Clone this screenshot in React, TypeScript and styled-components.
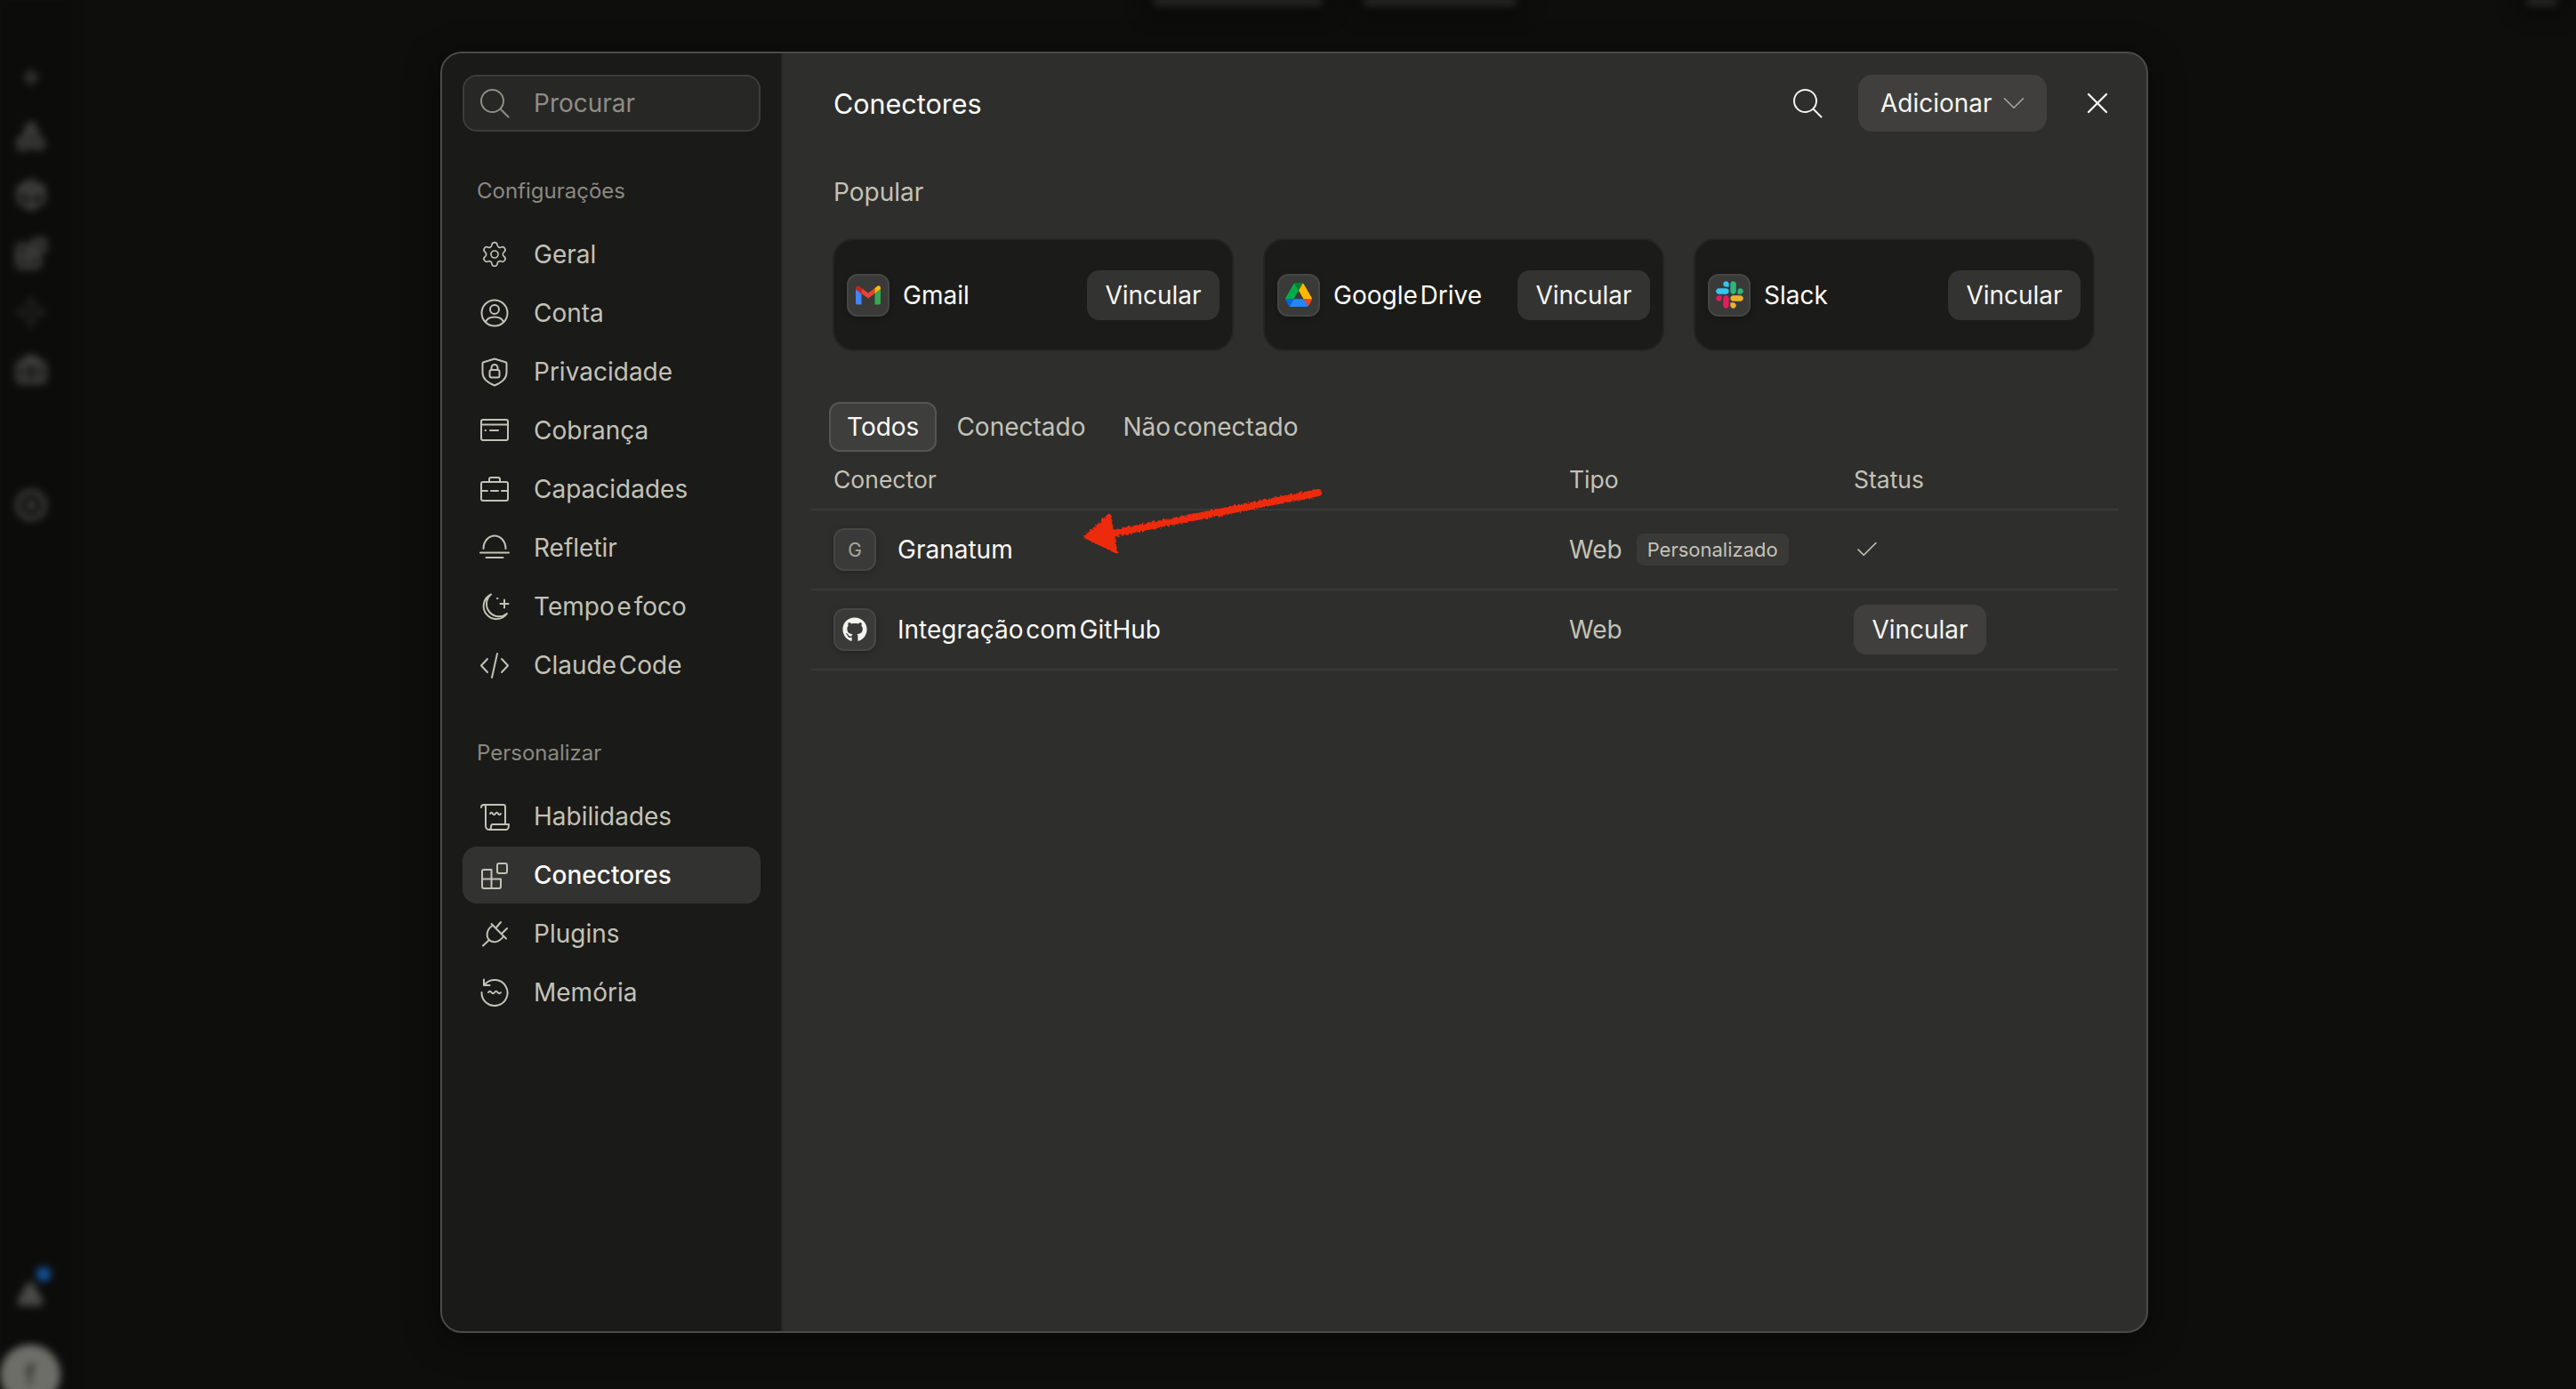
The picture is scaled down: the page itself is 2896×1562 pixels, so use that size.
import React from 'react';
import styled, { createGlobalStyle } from 'styled-components';
import { Check, ChevronDown, Settings, X, Sparkle, Blocks, Package, Shapes, Briefcase, Disc, Triangle } from 'lucide-react';
import { FaGithub } from 'react-icons/fa';

const GlobalStyle = createGlobalStyle`
  html, body { margin: 0; padding: 0; background: #0d0d0c; }
  * { box-sizing: border-box; }
  body { font-family: Inter, "Noto Sans", sans-serif; color: #c3c2b7; word-spacing: -5px; }
`;

const Page = styled.div`
  position: relative;
  width: 2896px;
  height: 1562px;
  overflow: hidden;
  background: #0e0e0d;
`;

// blurred app behind the dialog
const Backdrop = styled.div`
  display: flex;
  height: 100%;
`;

const Rail = styled.div`
  width: 84px;
  height: 100%;
  display: flex;
  flex-direction: column;
  padding-top: 54px;
  background: #0c0c0b;
  color: #4a4a47;
  filter: blur(4px);
`;

const RailItem = styled.div<{ $gap?: number; $faint?: boolean }>`
  height: 66px;
  width: 70px;
  flex: none;
  display: flex;
  align-items: center;
  justify-content: center;
  margin-top: ${(p) => p.$gap ?? 0}px;
  opacity: ${(p) => (p.$faint ? 0.3 : 1)};
`;

const RailFoot = styled.div`
  margin-top: auto;
  display: flex;
  flex-direction: column;
`;

const Bell = styled.div`
  position: relative;
  height: 44px;
  width: 68px;
  display: flex;
  align-items: center;
  justify-content: center;
`;

const BlueDot = styled.span`
  position: absolute;
  left: 41px;
  top: -8px;
  width: 16px;
  height: 16px;
  border-radius: 50%;
  background: #14559f;
`;

const Avatar = styled.div`
  width: 68px;
  height: 68px;
  margin: 35px 0 -18px 0;
  border-radius: 50%;
  background: #6d6e67;
  color: #1a1a18;
  display: flex;
  align-items: center;
  justify-content: center;
  font-size: 30px;
`;

const TopArea = styled.div`
  flex: 1;
  display: flex;
  gap: 46px;
  padding: 0 20px 0 1212px;
`;

const BlurBar = styled.div<{ $w: number; $end?: boolean }>`
  width: ${(p) => p.$w}px;
  height: 8px;
  margin: -2px 0 0 ${(p) => (p.$end ? 'auto' : '0')};
  background: #2c2c2a;
  border-radius: 4px;
  box-shadow: 0 0 18px 10px #090909;
  filter: blur(4px);
`;

const Overlay = styled.div`
  position: absolute;
  inset: 0;
  padding: 58px 0 0 495px;
`;

const Dialog = styled.div`
  width: 1920px;
  height: 1441px;
  display: flex;
  overflow: hidden;
  border: 2px solid #4b4b48;
  border-radius: 24px;
  background: #2e2e2c;
  box-shadow: 0 8px 40px rgba(0, 0, 0, 0.45);
`;

const Sidebar = styled.aside`
  width: 383px;
  flex: none;
  padding: 24px 23px 0;
  background: #1a1a18;
  border-right: 2px solid #262624;
`;

const SearchBox = styled.div`
  height: 64px;
  display: flex;
  align-items: center;
  gap: 28px;
  padding-left: 18px;
  border: 2px solid #3c3c39;
  border-radius: 16px;
  background: #272725;
  color: #8e8d85;
  font-size: 28px;
`;

const SectionLabel = styled.div`
  height: 34px;
  margin: 49px 0 23px 16px;
  display: flex;
  align-items: center;
  color: #8a8981;
  font-size: 24px;
`;

const NavList = styled.nav`
  display: flex;
  flex-direction: column;
  gap: 2px;
`;

const NavItem = styled.div<{ $active?: boolean }>`
  height: 64px;
  display: flex;
  align-items: center;
  gap: 28px;
  padding-left: 20px;
  border-radius: 16px;
  font-size: 28px;
  font-weight: ${(p) => (p.$active ? 500 : 400)};
  color: ${(p) => (p.$active ? '#fbfbf8' : '#c3c2b7')};
  background: ${(p) => (p.$active ? '#323230' : 'transparent')};
`;

const NavGlyph = styled.span`
  width: 32px;
  height: 32px;
  flex: none;
  display: flex;
  align-items: center;
  justify-content: center;
  color: #c3c2b7;
`;

const IconSvg = styled.svg`
  width: 32px;
  height: 32px;
  flex: none;
  fill: none;
  stroke: currentColor;
  stroke-width: 2;
  stroke-linecap: round;
  stroke-linejoin: round;
  overflow: visible;
`;

const Main = styled.main`
  flex: 1;
  padding: 24px 31px 0 32px;
  display: flex;
  flex-direction: column;
`;

const Header = styled.header`
  height: 64px;
  display: flex;
  align-items: center;
  gap: 37px;
  padding: 0 4px 0 25px;
`;

const Title = styled.h1`
  margin: 0 auto 0 0;
  font-size: 30.5px;
  font-weight: 400;
  color: #fbfbf8;
`;

const IconButton = styled.button`
  width: 40px;
  height: 40px;
  padding: 0;
  border: 0;
  background: none;
  color: #f4f4ef;
  display: flex;
  align-items: center;
  justify-content: center;
`;

const AddButton = styled.button`
  width: 212px;
  height: 64px;
  padding: 0 0 0 25px;
  border: 0;
  border-radius: 16px;
  background: #403f3d;
  color: #f6f6f1;
  font: inherit;
  font-size: 28px;
  display: flex;
  align-items: center;
  gap: 3px;
`;

const Popular = styled.div`
  height: 36px;
  margin: 50px 0 34px 25px;
  display: flex;
  align-items: center;
  color: #c3c2b7;
  font-size: 28px;
`;

const Cards = styled.div`
  display: flex;
  gap: 33px;
  padding-left: 24px;
`;

const Card = styled.div`
  width: 451px;
  height: 127px;
  display: flex;
  align-items: center;
  gap: 15px;
  padding: 0 14px 0 14px;
  border-radius: 24px;
  background: #1b1b19;
  border: 2px solid #242422;
  color: #fbfbf8;
  font-size: 28px;
`;

const LogoTile = styled.div<{ $muted?: boolean }>`
  width: 48px;
  height: 48px;
  flex: none;
  display: flex;
  align-items: center;
  justify-content: center;
  border-radius: 12px;
  background: #3a3a38;
  border: 2px solid #464643;
  color: ${(p) => (p.$muted ? '#a9a89f' : '#f4f4ef')};
  font-size: 21px;
  box-shadow: 0 2px 6px rgba(0, 0, 0, 0.25);
`;

const LinkButton = styled.button<{ $raised?: boolean }>`
  width: 149px;
  height: 56px;
  margin-left: ${(p) => (p.$raised ? 0 : 'auto')};
  padding: 0;
  border: 0;
  border-radius: 14px;
  background: ${(p) => (p.$raised ? '#403f3d' : '#333331')};
  color: #f6f6f1;
  font: inherit;
  font-size: 28px;
`;

const Tabs = styled.div`
  display: flex;
  gap: 2px;
  margin: 57px 0 0 20px;
`;

const Tab = styled.div<{ $active?: boolean }>`
  height: 56px;
  display: flex;
  align-items: center;
  padding: 0 18px;
  border: 2px solid ${(p) => (p.$active ? '#555552' : 'transparent')};
  border-radius: 12px;
  background: ${(p) => (p.$active ? '#3e3e3c' : 'transparent')};
  color: ${(p) => (p.$active ? '#fbfbf8' : '#c3c2b7')};
  font-size: 28px;
`;

const Row = styled.div<{ $head?: boolean }>`
  display: grid;
  grid-template-columns: 827px 320px 1fr;
  align-items: center;
  height: ${(p) => (p.$head ? 66 : 90)}px;
  padding: ${(p) => (p.$head ? '0 0 2px 25px' : '0 0 0 25px')};
  border-bottom: 2px solid #393937;
  font-size: ${(p) => (p.$head ? 26.5 : 28)}px;
  color: #c3c2b7;
`;

const NameCell = styled.div`
  display: flex;
  align-items: center;
  gap: 24px;
  color: #fbfbf8;
`;

const TypeCell = styled.div`
  display: flex;
  align-items: center;
  gap: 16px;
`;

const Badge = styled.span`
  height: 36px;
  padding: 0 12px;
  display: flex;
  align-items: center;
  border-radius: 8px;
  background: #393937;
  font-size: 22px;
`;

const StatusCheck = styled.div`
  display: flex;
  color: #c3c2b7;
`;

const MarkArrow = styled.svg`
  position: absolute;
  left: 1210px;
  top: 540px;
  width: 285px;
  height: 95px;
  overflow: visible;
`;

const SearchIcon = () => (
  <IconSvg viewBox="0 0 32 32">
    <circle cx="13.5" cy="13.5" r="12.5" />
    <path d="M23 23l8.5 8.5" />
  </IconSvg>
);

const GearIcon = () => <Settings size={40} strokeWidth={1.25} />;

const AccountIcon = () => (
  <IconSvg viewBox="0 0 32 32">
    <circle cx="16" cy="16" r="14.5" />
    <circle cx="16" cy="12" r="5" />
    <path d="M6 26c1.5-4 5.5-5.5 10-5.5S24.500 22 26 26" />
  </IconSvg>
);

const ShieldIcon = () => (
  <IconSvg viewBox="0 0 32 32">
    <path d="M16 1.500 29 5.500a1 1 0 0 1 .5 1V17c0 7-6 11.500-13.500 14.500C8.500 28.500 2.500 24 2.500 17V6.500a1 1 0 0 1 .5-1z" />
    <rect x="10.500" y="14" width="11" height="8.500" rx="2" />
    <path d="M12.500 14v-2.500a3.500 3.500 0 0 1 7 0V14" />
  </IconSvg>
);

const BillingIcon = () => (
  <IconSvg viewBox="0 0 32 32">
    <rect x="1" y="4" width="30" height="23" rx="2" />
    <path d="M1 9.500h30M5.500 16h.5M11 16h9" />
  </IconSvg>
);

const CaseIcon = () => (
  <IconSvg viewBox="0 0 32 32">
    <rect x="1" y="8" width="30" height="21" rx="2" />
    <path d="M10 8V5a2 2 0 0 1 2-2h8a2 2 0 0 1 2 2v3M1 18h7M12 18h8M24 18h7" />
  </IconSvg>
);

const ReflectIcon = () => (
  <IconSvg viewBox="0 0 32 32">
    <path d="M3.500 17A12.500 14.500 0 0 1 28.500 17M0 21.500h32M6.500 27h19" />
  </IconSvg>
);

const MoonIcon = () => (
  <IconSvg viewBox="0 0 32 32">
    <path d="M12 2.500A14.500 14.500 0 1 0 30 24 13 13 0 0 1 12 2.500z" />
    <path d="M27 8.500v9M22.500 13h9M19 7h.5" />
  </IconSvg>
);

const CodeIcon = () => (
  <IconSvg viewBox="0 0 32 32">
    <path d="M8 9l-7 7.500L8 24M24 9l7 7.500L24 24M19 3l-6 27" />
  </IconSvg>
);

const ScrollIcon = () => (
  <IconSvg viewBox="0 0 32 32">
    <path d="M1 6c0-2 1.500-3 3-3s2 1.500 2 3v21c0 2.500 2 4 4 4h19c2 0 3-2 3-6H14c-2 0-2 2-2 3 0 1.800-1 3-2 3" />
    <path d="M4 3h22c1.500 0 2 1 2 2v20M11 13q1.500-2.500 3 0t3 0 3 0 3 0" />
  </IconSvg>
);

const ConnectorIcon = () => (
  <IconSvg viewBox="0 0 32 32">
    <path d="M2 12a2 2 0 0 1 2-2h8.500v10.500H23V29a2 2 0 0 1-2 2H4a2 2 0 0 1-2-2z" />
    <path d="M2 20.500h10.500V31" />
    <rect x="19" y="3" width="11" height="11" rx="2" />
  </IconSvg>
);

const PlugIcon = () => (
  <IconSvg viewBox="0 0 32 32">
    <path d="M12.500 5L29 21.500M13.500 7C7 11 6 19 10 23s11 3 16-4M10 23l-7 6.500M23 3l-5.500 6.500M30 10l-6 6" />
  </IconSvg>
);

const MemoryIcon = () => (
  <IconSvg viewBox="0 0 32 32">
    <path d="M5.500 6.500A14.500 14.500 0 1 1 1.500 16" />
    <path d="M4 1.500v6.500h6.500M9 16q1.750-2.500 3.500 0t3.500 0 3.500 0 3.500 0" />
  </IconSvg>
);

const GmailLogo = () => (
  <svg width="28" height="22" viewBox="0 0 28 22">
    <path d="M0 4v15.500a2 2 0 0 0 2 2h4.500V9z" fill="#4285f4" />
    <path d="M21.500 9v12.500H26a2 2 0 0 0 2-2V4z" fill="#34a853" />
    <path d="M6.500 9 14 14.500 21.500 9V3L14 8.500 6.500 3z" fill="#ea4335" />
    <path d="M0 3v1l6.500 5V3L4 1C2-.5 0 1 0 3z" fill="#c5221f" />
    <path d="M21.500 3v6L28 4V3c0-2.500-2-3.500-4-2z" fill="#fbbc04" />
  </svg>
);

const DriveLogo = () => (
  <svg width="30" height="27" viewBox="0 0 87.300 78">
    <path d="m6.600 66.850 3.850 6.650c.8 1.400 1.950 2.500 3.300 3.300l13.750-23.800h-27.500c0 1.550.4 3.100 1.200 4.500z" fill="#0066da" />
    <path d="m43.650 25-13.750-23.800c-1.350.8-2.500 1.900-3.300 3.300l-25.400 44a9.060 9.060 0 0 0 -1.200 4.500h27.500z" fill="#00ac47" />
    <path d="m73.550 76.800c1.350-.8 2.500-1.900 3.300-3.300l1.600-2.750 7.650-13.250c.8-1.400 1.200-2.950 1.200-4.500h-27.502l5.852 11.500z" fill="#ea4335" />
    <path d="m43.650 25 13.750-23.800c-1.350-.8-2.900-1.200-4.500-1.200h-18.500c-1.600 0-3.150.45-4.500 1.200z" fill="#00832d" />
    <path d="m59.800 53h-32.300l-13.750 23.800c1.350.8 2.900 1.200 4.500 1.200h50.800c1.600 0 3.150-.45 4.500-1.200z" fill="#2684fc" />
    <path d="m73.400 26.500-12.700-22c-.8-1.400-1.950-2.500-3.300-3.300l-13.750 23.800 16.150 28h27.450c0-1.550-.4-3.100-1.200-4.500z" fill="#ffba00" />
  </svg>
);

const SlackLogo = () => (
  <svg width="31" height="31" viewBox="0 0 127 127">
    <path d="M27.200 80c0 7.300-5.900 13.200-13.200 13.200C6.700 93.200.8 87.300.8 80c0-7.300 5.900-13.200 13.200-13.200h13.200V80zm6.600 0c0-7.300 5.900-13.200 13.200-13.200 7.300 0 13.200 5.900 13.200 13.200v33c0 7.300-5.900 13.200-13.200 13.200-7.300 0-13.200-5.900-13.200-13.200V80z" fill="#E01E5A" />
    <path d="M47 27c-7.300 0-13.200-5.900-13.200-13.200C33.800 6.500 39.700.6 47 .6c7.300 0 13.200 5.900 13.200 13.200V27H47zm0 6.700c7.300 0 13.200 5.900 13.200 13.200 0 7.300-5.900 13.200-13.200 13.200H13.900C6.600 60.100.7 54.200.7 46.900c0-7.300 5.900-13.200 13.200-13.200H47z" fill="#36C5F0" />
    <path d="M99.900 46.900c0-7.300 5.900-13.200 13.200-13.200 7.300 0 13.200 5.900 13.200 13.200 0 7.300-5.900 13.200-13.200 13.200H99.900V46.900zm-6.600 0c0 7.300-5.900 13.200-13.200 13.200-7.300 0-13.200-5.900-13.200-13.200V13.800C66.900 6.500 72.800.6 80.100.6c7.300 0 13.200 5.900 13.200 13.200v33.100z" fill="#2EB67D" />
    <path d="M80.100 99.800c7.300 0 13.200 5.900 13.200 13.200 0 7.300-5.900 13.200-13.200 13.200-7.300 0-13.200-5.900-13.200-13.200V99.800h13.200zm0-6.600c-7.300 0-13.200-5.900-13.200-13.200 0-7.300 5.900-13.200 13.200-13.200h33.100c7.300 0 13.200 5.900 13.200 13.200 0 7.300-5.900 13.200-13.200 13.200H80.100z" fill="#ECB22E" />
  </svg>
);

const settingsItems = [
  { label: 'Geral', icon: <GearIcon /> },
  { label: 'Conta', icon: <AccountIcon /> },
  { label: 'Privacidade', icon: <ShieldIcon /> },
  { label: 'Cobrança', icon: <BillingIcon /> },
  { label: 'Capacidades', icon: <CaseIcon /> },
  { label: 'Refletir', icon: <ReflectIcon /> },
  { label: 'Tempo e foco', icon: <MoonIcon /> },
  { label: 'Claude Code', icon: <CodeIcon /> },
];

const customizeItems = [
  { label: 'Habilidades', icon: <ScrollIcon /> },
  { label: 'Conectores', icon: <ConnectorIcon />, active: true },
  { label: 'Plugins', icon: <PlugIcon /> },
  { label: 'Memória', icon: <MemoryIcon /> },
];

const popular = [
  { name: 'Gmail', logo: <GmailLogo /> },
  { name: 'Google Drive', logo: <DriveLogo /> },
  { name: 'Slack', logo: <SlackLogo /> },
];

const railIcons = [Sparkle, Shapes, Package, Blocks, Sparkle, Briefcase];

const App: React.FC = () => {
  return (
    <Page>
      <GlobalStyle />
      <Backdrop>
        <Rail>
          {railIcons.map((Icon, i) => (
            <RailItem key={i} $faint={i === 4}>
              <Icon size={i === 0 ? 18 : 36} strokeWidth={3} />
            </RailItem>
          ))}
          <RailItem $gap={85}>
            <Disc size={36} strokeWidth={3} />
          </RailItem>
          <RailFoot>
            <Bell>
              <BlueDot />
              <Triangle size={30} strokeWidth={3} fill="currentColor" />
            </Bell>
            <Avatar>f</Avatar>
          </RailFoot>
        </Rail>
        <TopArea>
          <BlurBar $w={191} />
          <BlurBar $w={172} />
          <BlurBar $w={36} $end />
        </TopArea>
      </Backdrop>

      <Overlay>
        <Dialog>
          <Sidebar>
            <SearchBox>
              <SearchIcon />
              Procurar
            </SearchBox>
            <SectionLabel>Configurações</SectionLabel>
            <NavList>
              {settingsItems.map((item) => (
                <NavItem key={item.label}>
                  <NavGlyph>{item.icon}</NavGlyph>
                  {item.label}
                </NavItem>
              ))}
            </NavList>
            <SectionLabel>Personalizar</SectionLabel>
            <NavList>
              {customizeItems.map((item) => (
                <NavItem key={item.label} $active={item.active}>
                  <NavGlyph>{item.icon}</NavGlyph>
                  {item.label}
                </NavItem>
              ))}
            </NavList>
          </Sidebar>

          <Main>
            <Header>
              <Title>Conectores</Title>
              <IconButton>
                <SearchIcon />
              </IconButton>
              <AddButton>
                Adicionar
                <ChevronDown size={42} strokeWidth={0.9} color="#a9a89f" />
              </AddButton>
              <IconButton>
                <X size={42} strokeWidth={1.4} />
              </IconButton>
            </Header>

            <Popular>Popular</Popular>
            <Cards>
              {popular.map((c) => (
                <Card key={c.name}>
                  <LogoTile>{c.logo}</LogoTile>
                  {c.name}
                  <LinkButton>Vincular</LinkButton>
                </Card>
              ))}
            </Cards>

            <Tabs>
              <Tab $active>Todos</Tab>
              <Tab>Conectado</Tab>
              <Tab>Não conectado</Tab>
            </Tabs>

            <Row $head>
              <div>Conector</div>
              <div>Tipo</div>
              <div>Status</div>
            </Row>
            <Row>
              <NameCell>
                <LogoTile $muted>G</LogoTile>
                Granatum
              </NameCell>
              <TypeCell>
                Web
                <Badge>Personalizado</Badge>
              </TypeCell>
              <StatusCheck>
                <Check size={30} strokeWidth={1.3} />
              </StatusCheck>
            </Row>
            <Row>
              <NameCell>
                <LogoTile>
                  <FaGithub size={28} />
                </LogoTile>
                Integração com GitHub
              </NameCell>
              <TypeCell>Web</TypeCell>
              <div>
                <LinkButton $raised>Vincular</LinkButton>
              </div>
            </Row>
          </Main>
        </Dialog>
      </Overlay>

      <MarkArrow viewBox="0 0 285 95">
        <defs>
          <filter id="rough" x="-5%" y="-20%" width="110%" height="140%">
            <feTurbulence type="fractalNoise" baseFrequency="0.35" numOctaves="2" seed="4" />
            <feDisplacementMap in="SourceGraphic" scale="4" />
          </filter>
        </defs>
        <g filter="url(#rough)" fill="#ee2a0e" stroke="#ee2a0e" strokeLinejoin="round">
          <path d="M272 14 L40 60" strokeWidth="8" fill="none" strokeLinecap="round" />
          <path d="M10 64 L37 39 L45 81 Z" strokeWidth="3" />
        </g>
      </MarkArrow>
    </Page>
  );
};

export default App;
